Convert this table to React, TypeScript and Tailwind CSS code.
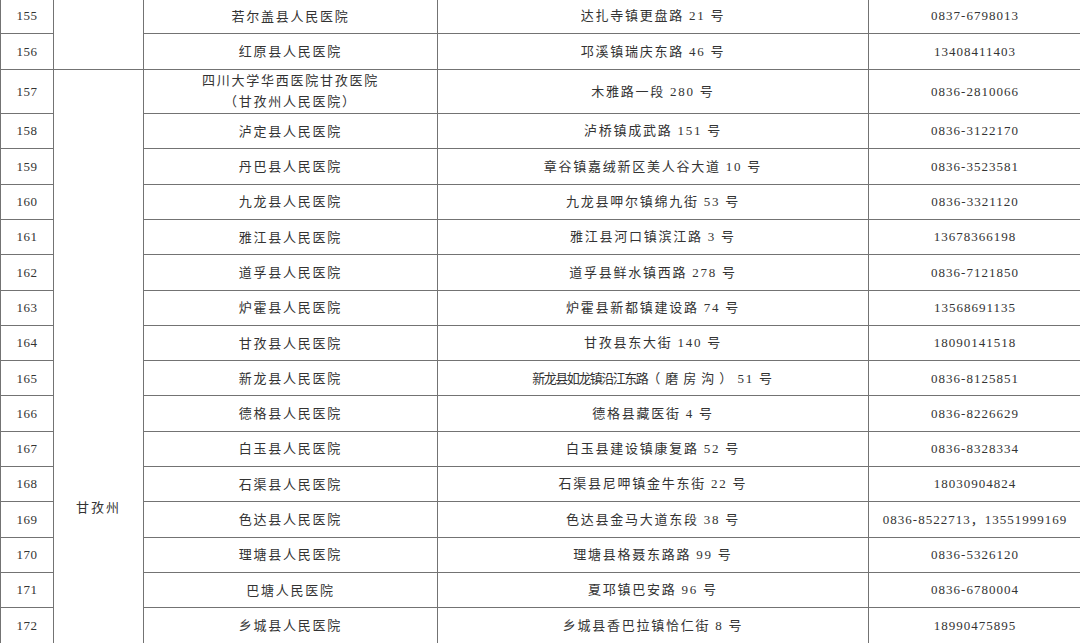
type Row = {
  no: string;
  hospital: string[];
  address: string;
  phone: string;
};

const rows: Row[] = [
  { no: "155", hospital: ["若尔盖县人民医院"], address: "达扎寺镇更盘路 21 号", phone: "0837-6798013" },
  { no: "156", hospital: ["红原县人民医院"], address: "邛溪镇瑞庆东路 46 号", phone: "13408411403" },
  { no: "157", hospital: ["四川大学华西医院甘孜医院", "（甘孜州人民医院）"], address: "木雅路一段 280 号", phone: "0836-2810066" },
  { no: "158", hospital: ["泸定县人民医院"], address: "泸桥镇成武路 151 号", phone: "0836-3122170" },
  { no: "159", hospital: ["丹巴县人民医院"], address: "章谷镇嘉绒新区美人谷大道 10 号", phone: "0836-3523581" },
  { no: "160", hospital: ["九龙县人民医院"], address: "九龙县呷尔镇绵九街 53 号", phone: "0836-3321120" },
  { no: "161", hospital: ["雅江县人民医院"], address: "雅江县河口镇滨江路 3 号", phone: "13678366198" },
  { no: "162", hospital: ["道孚县人民医院"], address: "道孚县鲜水镇西路 278 号", phone: "0836-7121850" },
  { no: "163", hospital: ["炉霍县人民医院"], address: "炉霍县新都镇建设路 74 号", phone: "13568691135" },
  { no: "164", hospital: ["甘孜县人民医院"], address: "甘孜县东大街 140 号", phone: "18090141518" },
  { no: "165", hospital: ["新龙县人民医院"], address: "", phone: "0836-8125851" },
  { no: "166", hospital: ["德格县人民医院"], address: "德格县藏医街 4 号", phone: "0836-8226629" },
  { no: "167", hospital: ["白玉县人民医院"], address: "白玉县建设镇康复路 52 号", phone: "0836-8328334" },
  { no: "168", hospital: ["石渠县人民医院"], address: "石渠县尼呷镇金牛东街 22 号", phone: "18030904824" },
  { no: "169", hospital: ["色达县人民医院"], address: "色达县金马大道东段 38 号", phone: "0836-8522713，13551999169" },
  { no: "170", hospital: ["理塘县人民医院"], address: "理塘县格聂东路路 99 号", phone: "0836-5326120" },
  { no: "171", hospital: ["巴塘人民医院"], address: "夏邛镇巴安路 96 号", phone: "0836-6780004" },
  { no: "172", hospital: ["乡城县人民医院"], address: "乡城县香巴拉镇恰仁街 8 号", phone: "18990475895" },
];

const cell = "border border-[#737373] text-center align-middle p-0 whitespace-nowrap";

// row 165 in the source is squeezed: tight characters, loose brackets
function SqueezedAddress() {
  return (
    <>
      <span className="tracking-[-1.5px]">新龙县如龙镇沿江东路</span>
      <span className="tracking-[5px]">（磨房沟）</span>
      <span className="tracking-[1.75px]">51 号</span>
    </>
  );
}

export default function App() {
  return (
    <div className="w-[1080px] h-[643px] overflow-hidden bg-white font-['Liberation_Serif','Noto_Sans_CJK_SC',serif] text-[#333333]">
      <table className="-mt-[2px] w-[1081px] table-fixed border-collapse">
        <colgroup>
          <col className="w-[53px]" />
          <col className="w-[90px]" />
          <col className="w-[294px]" />
          <col className="w-[431px]" />
          <col className="w-[213px]" />
        </colgroup>
        <tbody>
          {rows.map((r, i) => (
            <tr key={r.no} className={r.no === "157" ? "h-[44.5px]" : "h-[35.3px]"}>
              <td className={`${cell} text-[13px] tracking-[0.5px]`}>{r.no}</td>
              {i === 0 && <td rowSpan={2} className={cell}></td>}
              {i === 2 && (
                <td rowSpan={16} className="border border-[#737373] p-0 text-center align-top">
                  <div className="pt-[428px] text-[13px] tracking-[2px]">甘孜州</div>
                </td>
              )}
              <td className={`${cell} text-[13px] tracking-[1.75px] leading-[21px]`}>
                {r.hospital.map((h) => (
                  <div key={h}>{h}</div>
                ))}
              </td>
              <td className={`${cell} text-[13px] tracking-[1.75px]`}>
                {r.no === "165" ? <SqueezedAddress /> : r.address}
              </td>
              <td className={`${cell} text-[13px] tracking-[1px]`}>{r.phone}</td>
            </tr>
          ))}
        </tbody>
      </table>
    </div>
  );
}
